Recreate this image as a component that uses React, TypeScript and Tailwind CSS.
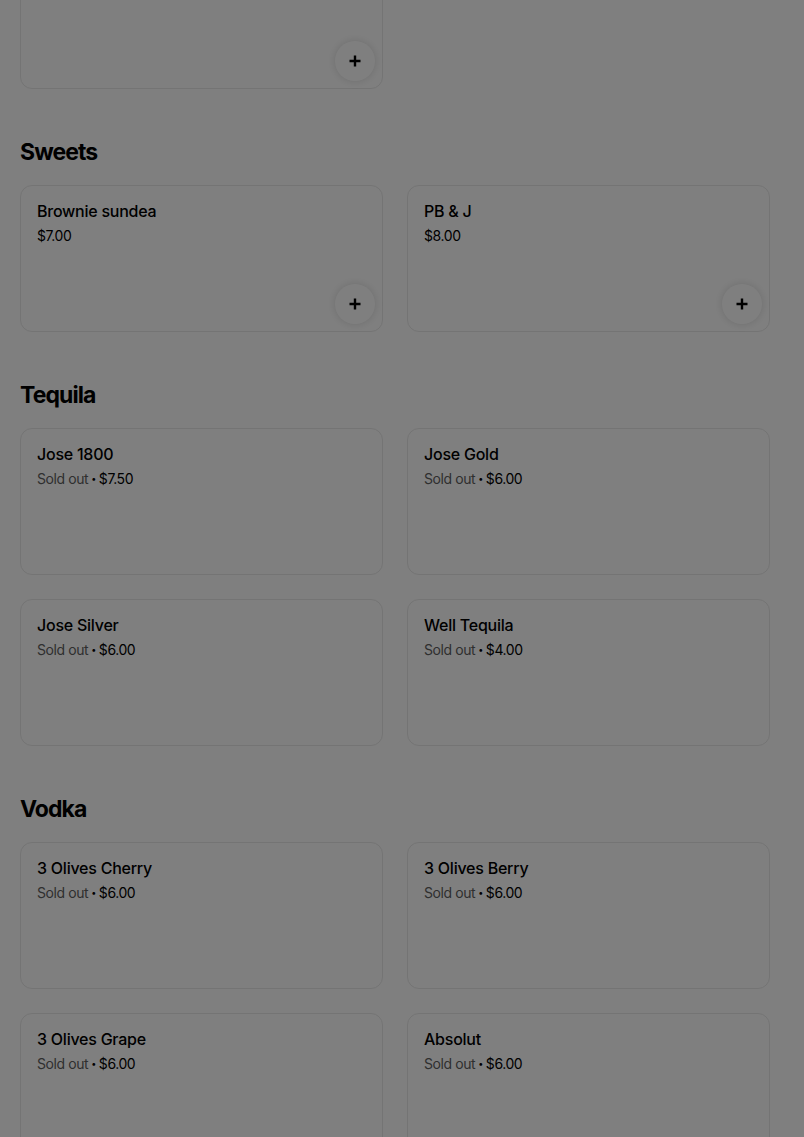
import React from "react";

type Item = {
  name: string;
  price: string;
  soldOut?: boolean;
};

type Section = {
  title: string;
  items: Item[];
};

const sections: Section[] = [
  {
    title: "Sweets",
    items: [
      { name: "Brownie sundea", price: "$7.00" },
      { name: "PB & J", price: "$8.00" },
    ],
  },
  {
    title: "Tequila",
    items: [
      { name: "Jose 1800", price: "$7.50", soldOut: true },
      { name: "Jose Gold", price: "$6.00", soldOut: true },
      { name: "Jose Silver", price: "$6.00", soldOut: true },
      { name: "Well Tequila", price: "$4.00", soldOut: true },
    ],
  },
  {
    title: "Vodka",
    items: [
      { name: "3 Olives Cherry", price: "$6.00", soldOut: true },
      { name: "3 Olives Berry", price: "$6.00", soldOut: true },
      { name: "3 Olives Grape", price: "$6.00", soldOut: true },
      { name: "Absolut", price: "$6.00", soldOut: true },
    ],
  },
];

function PlusIcon() {
  return (
    <svg width="14" height="14" viewBox="0 0 14 14" fill="none">
      <path d="M7 1.5v11M1.5 7h11" stroke="#000" strokeWidth="2.4" />
    </svg>
  );
}

function ItemCard({ item }: { item: Item }) {
  return (
    <div className="relative h-[147px] rounded-xl border border-[#e8e8e8] bg-white px-4 pt-[15px]">
      <div className="text-base leading-5 font-medium tracking-[-0.015em] text-black">
        {item.name}
      </div>
      <div className="mt-[5px] flex items-center text-sm leading-5 tracking-[-0.03em] text-black">
        {item.soldOut && (
          <>
            <span className="text-[#5e5e5e]">Sold out</span>
            <span className="mx-[3px] text-[9px]">•</span>
          </>
        )}
        <span>{item.price}</span>
      </div>
      {!item.soldOut && (
        <button className="absolute right-[7px] bottom-[7px] flex size-10 items-center justify-center rounded-full bg-white shadow-[0_0_8px_rgba(0,0,0,0.14)]">
          <PlusIcon />
        </button>
      )}
    </div>
  );
}

export default function App() {
  return (
    <div
      className="relative min-h-screen overflow-hidden bg-white"
      style={{ fontFamily: "Inter, 'Liberation Sans', sans-serif" }}
    >
      <div className="mt-[-58px] pl-5 pr-[34px] pb-10">
        <div className="grid grid-cols-2 gap-6">
          <ItemCard item={{ name: "Lemonade", price: "$3.00" }} />
        </div>

        {sections.map((section) => (
          <div key={section.title}>
            <h2 className="mt-[47px] mb-[17px] text-[23px] leading-8 font-bold tracking-[-0.04em] text-black">
              {section.title}
            </h2>
            <div className="grid grid-cols-2 gap-6">
              {section.items.map((item) => (
                <ItemCard key={item.name} item={item} />
              ))}
            </div>
          </div>
        ))}
      </div>

      <div className="fixed inset-0 bg-black/50" />
    </div>
  );
}
